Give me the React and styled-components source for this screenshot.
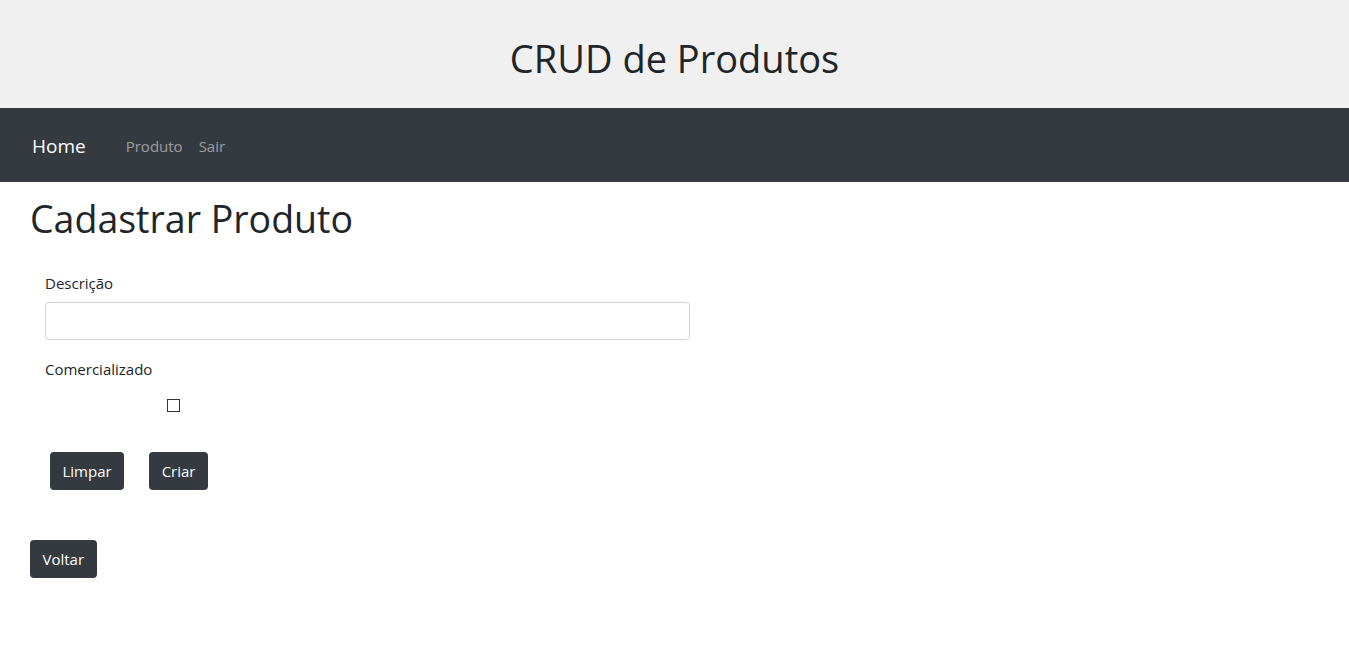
import React from "react";
import styled, { createGlobalStyle } from "styled-components";

const GlobalStyle = createGlobalStyle`
  body {
    margin: 0;
    font-family: "Open Sans", "Noto Sans", sans-serif;
    color: #212529;
    background: #fff;
  }
`;

const Header = styled.header`
  box-sizing: border-box;
  height: 108px;
  padding-top: 10px;
  background: #f0f0f0;
  display: flex;
  align-items: center;
  justify-content: center;
`;

const HeaderTitle = styled.h1`
  margin: 0;
  font-size: 38px;
  font-weight: 400;
  line-height: 1.2;
  color: #212529;
`;

const NavBar = styled.nav`
  box-sizing: border-box;
  height: 74px;
  background: #343a40;
  display: flex;
  align-items: center;
  padding: 2px 32px 0;
`;

const Brand = styled.a`
  font-size: 19px;
  color: #fff;
  margin-right: 40px;
  text-decoration: none;
`;

const NavLink = styled.a`
  font-size: 15px;
  color: rgba(255, 255, 255, 0.5);
  margin-right: 16px;
  text-decoration: none;
`;

const Main = styled.main`
  padding: 14px 30px;
`;

const PageTitle = styled.h1`
  margin: 0 0 30px;
  font-size: 37.5px;
  font-weight: 400;
  line-height: 45px;
`;

const Form = styled.form`
  width: 645px;
  margin-left: 15px;
  display: flex;
  flex-direction: column;
`;

const Label = styled.label`
  font-size: 15px;
  line-height: 24px;
  margin-bottom: 7px;
`;

const Input = styled.input`
  box-sizing: border-box;
  height: 38px;
  width: 100%;
  border: 1px solid #ced4da;
  border-radius: 4px;
  margin-bottom: 17px;
`;

const Check = styled.input`
  appearance: none;
  box-sizing: border-box;
  width: 13px;
  height: 13px;
  border: 1px solid #333;
  background: #fff;
  margin: 11px 0 0 122px;
  display: block;
`;

const ButtonRow = styled.div`
  display: flex;
  gap: 25px;
  margin: 40px 0 0 5px;
`;

const Button = styled.button`
  height: 38px;
  padding: 0 12.5px;
  background: #343a40;
  color: #fff;
  border: none;
  border-radius: 4px;
  font-family: inherit;
  font-size: 15px;
  margin-top: ${(p) => p.$top || 0}px;
`;

export default function App() {
  return (
    <>
      <GlobalStyle />
      <Header>
        <HeaderTitle>CRUD de Produtos</HeaderTitle>
      </Header>
      <NavBar>
        <Brand>Home</Brand>
        <NavLink>Produto</NavLink>
        <NavLink>Sair</NavLink>
      </NavBar>
      <Main>
        <PageTitle>Cadastrar Produto</PageTitle>
        <Form>
          <Label>Descrição</Label>
          <Input type="text" />
          <Label>Comercializado</Label>
          <Check type="checkbox" />
          <ButtonRow>
            <Button type="button">Limpar</Button>
            <Button type="button">Criar</Button>
          </ButtonRow>
        </Form>
        <Button type="button" $top={50}>Voltar</Button>
      </Main>
    </>
  );
}
